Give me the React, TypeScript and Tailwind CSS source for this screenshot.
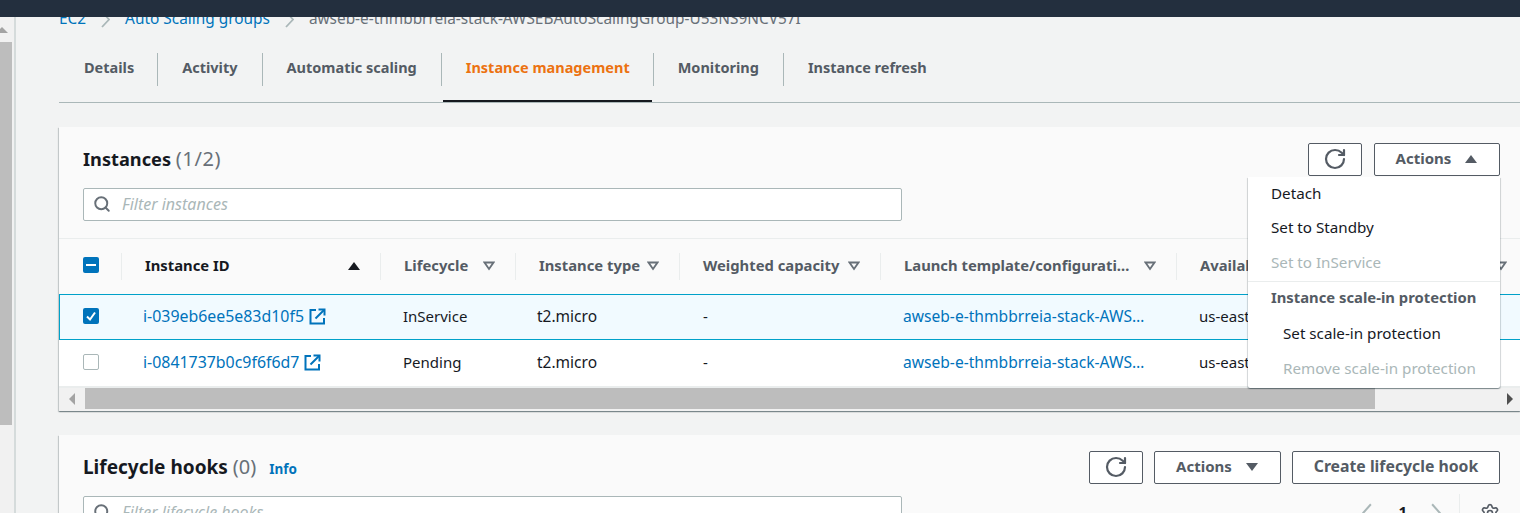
import React from 'react';
import { RotateCw, Search, Settings } from 'lucide-react';

const font = "font-['Noto_Sans',sans-serif]";
const panelShadow = 'shadow-[0_1px_1px_0_rgba(0,28,36,0.3),1px_1px_1px_0_rgba(0,28,36,0.15),-1px_1px_1px_0_rgba(0,28,36,0.15)]';

const tabs = ['Details', 'Activity', 'Automatic scaling', 'Instance management', 'Monitoring', 'Instance refresh'];

const Caret = ({ up, className }: { up?: boolean; className?: string }) => (
  <svg width="14" height="10" viewBox="0 0 14 10" className={className}>
    <path d={up ? 'M7 1 L13 9 H1 Z' : 'M7 9 L13 1 H1 Z'} fill="currentColor" />
  </svg>
);

const SortCaret = () => (
  <svg width="12" height="10" viewBox="0 0 12 10" className="shrink-0 text-[#687078]">
    <path d="M6 8 L10.5 1.5 H1.5 Z" fill="none" stroke="currentColor" strokeWidth="1.8" />
  </svg>
);

// open-in-new-tab icon, heavier than the lucide one
const External = () => (
  <svg width="17" height="17" viewBox="0 0 17 17" className="ml-[5px] shrink-0" fill="none" stroke="currentColor" strokeWidth="2">
    <path d="M7 2 H1.5 V15.5 H15 V10" />
    <path d="M6.5 10.5 L15 2" />
    <path d="M9.5 1.5 H15.5 V7.5" />
  </svg>
);

const Chevron = ({ left, className, w = 9, h = 17 }: { left?: boolean; className?: string; w?: number; h?: number }) => (
  <svg width={w} height={h} viewBox="0 0 9 17" preserveAspectRatio="none" className={`shrink-0 ${className ?? ''}`} fill="none" stroke="currentColor" strokeWidth="1.8">
    <path d={left ? 'M8 1 L1 8.5 L8 16' : 'M1 1 L8 8.5 L1 16'} />
  </svg>
);

const Button = ({ className, children }: { className: string; children: React.ReactNode }) => (
  <div className={`flex h-[33px] items-center justify-center rounded-[2px] border border-[#545b64] bg-white pb-[2px] font-bold text-[#545b64] ${className}`}>
    {children}
  </div>
);

const Refresh = () => (
  <Button className="w-[54px]">
    <RotateCw size={24} strokeWidth={2.2} />
  </Button>
);

const Filter = ({ placeholder }: { placeholder: string }) => (
  <div className="flex h-[33px] w-[819px] items-center rounded-[2px] border border-[#aab7b8] bg-white pb-[1px] pl-[9px] text-[16px] text-[#aab7b8] italic">
    <Search size={18} strokeWidth={2.6} className="mr-[11px] text-[#687078]" />
    {placeholder}
  </div>
);

const HeaderCell = ({ label, width, pr = 'pr-[21px]', divider = true, dark, sortUp }: {
  label: string; width: string; pr?: string; divider?: boolean; dark?: boolean; sortUp?: boolean;
}) => (
  <div className={`relative flex h-full shrink-0 items-center justify-between pb-[2px] pl-[23px] text-[14.8px] font-bold ${width} ${pr} ${dark ? 'text-[#16191f]' : 'text-[#545b64]'}`}>
    <span className="whitespace-nowrap">{label}</span>
    {sortUp ? <Caret up className="shrink-0 text-[#16191f]" /> : <SortCaret />}
    {divider && <div className="absolute top-[14px] right-0 h-[27px] w-px bg-[#eaeded]" />}
  </div>
);

const Row = ({ id, state, selected }: { id: string; state: string; selected?: boolean }) => (
  <div className={`flex h-[46px] w-[1600px] items-center pb-[2px] text-[15px] leading-[22px] text-[#16191f] ${selected ? 'border-y border-l border-[#00a1c9] bg-[#f1faff]' : 'bg-white'}`}>
    <div className={`flex shrink-0 justify-center ${selected ? 'w-[62px] pr-[1px]' : 'w-[63px]'}`}>
      {selected ? (
        <div className="flex h-[16px] w-[16px] items-center justify-center rounded-[2px] bg-[#0073bb]">
          <svg width="12" height="12" viewBox="0 0 12 12">
            <path d="M2 6.5 L5 9.5 L10 2.5" fill="none" stroke="white" strokeWidth="2" />
          </svg>
        </div>
      ) : (
        <div className="h-[16px] w-[16px] rounded-[2px] border border-[#aab7b8] bg-white" />
      )}
    </div>
    <div className="flex w-[259px] shrink-0 items-center pl-[21px] text-[15.9px] text-[#0073bb]">
      {id}
      <External />
    </div>
    <div className="w-[135px] shrink-0 pl-[22px]">{state}</div>
    <div className="w-[164px] shrink-0 pl-[21px] text-[15.5px]">t2.micro</div>
    <div className="w-[201px] shrink-0 pl-[23px]">-</div>
    <div className="w-[296px] shrink-0 pl-[22px] text-[15.6px] whitespace-nowrap text-[#0073bb]">awseb-e-thmbbrreia-stack-AWS…</div>
    <div className="pl-[22px]">us-east-1a</div>
  </div>
);

const App: React.FC = () => {
  return (
    <div className={`flex h-[513px] w-[1520px] flex-col overflow-hidden bg-[#f2f3f3] ${font}`}>
      <div className="relative z-10 h-[17px] shrink-0 bg-[#232f3e]" />
      <div className="flex min-h-0 flex-1">
        {/* page scrollbar */}
        <div className="flex w-[16px] shrink-0">
          <div className="flex w-[14px] flex-col bg-[#f1f1f1]">
            <div className="h-[25px] w-[12px] overflow-hidden pt-[10px]">
              <div className="-ml-[4px] h-0 w-0 border-x-[6px] border-b-[6px] border-x-transparent border-b-[#a3a3a3]" />
            </div>
            <div className="h-[383px] w-[12px] bg-[#bdbdbd]" />
          </div>
          <div className="w-[2px] bg-[#d5dbdb]" />
        </div>

        <div className="relative min-w-0 flex-1 pl-[43px]">
          <div className="-mt-[9px] flex h-[22px] items-center whitespace-nowrap text-[15.4px] text-[#687078]">
            <span className="text-[#0073bb]">EC2</span>
            <Chevron className="mx-[15px] text-[#aab7b8]" />
            <span className="text-[#0073bb]">Auto Scaling groups</span>
            <Chevron className="mx-[15px] text-[#aab7b8]" />
            <span>awseb-e-thmbbrreia-stack-AWSEBAutoScalingGroup-U53NS9NCV57I</span>
          </div>

          {/* tabs */}
          <div className="mt-[5px] flex h-[68px] border-b border-[#aab7b8]">
            {tabs.map((tab, i) => (
              <div key={tab} className="relative h-full pt-[18px]">
                <div className={`flex h-[33px] items-center pb-[3px] text-[14.5px] font-bold ${i === 0 ? 'pr-[23px] pl-[25px]' : i === 3 ? 'pr-[23px] pl-[24px]' : 'px-[24px]'} ${i === 3 ? 'text-[#ec7211]' : 'text-[#545b64]'} ${i < tabs.length - 1 ? 'border-r border-[#aab7b8]' : ''}`}>
                  {tab}
                </div>
                {i === 3 && <div className="absolute right-[2px] bottom-0 left-[1px] h-[2px] bg-[#16191f]" />}
              </div>
            ))}
          </div>

          {/* instances panel */}
          <div className={`mt-[24px] h-[284px] overflow-hidden bg-white ${panelShadow}`}>
            <div className="h-[112px] border-b border-[#eaeded] bg-[#fafafa] pt-[16px] pr-[20px] pl-[24px]">
              <div className="flex h-[33px] items-center justify-between">
                <div className="pb-[2px] text-[18.2px] font-bold text-[#16191f]">
                  Instances <span className="text-[20px] font-normal tracking-[0.6px] text-[#687078]">(1/2)</span>
                </div>
                <div className="flex gap-[12px]">
                  <Refresh />
                  <Button className="w-[126px] gap-[13px] text-[15px]">Actions <Caret up /></Button>
                </div>
              </div>
              <div className="mt-[12px]"><Filter placeholder="Filter instances" /></div>
            </div>
            <div className="flex h-[55px] w-[1600px] items-center bg-[#fafafa]">
              <div className="relative flex h-full w-[63px] shrink-0 items-center justify-center pb-[3px]">
                <div className="flex h-[16px] w-[16px] items-center justify-center rounded-[2px] bg-[#0073bb]">
                  <div className="h-[2px] w-[10px] bg-white" />
                </div>
                <div className="absolute top-[14px] right-0 h-[27px] w-px bg-[#eaeded]" />
              </div>
              <HeaderCell label="Instance ID" width="w-[259px]" pr="pr-[20px]" dark sortUp />
              <HeaderCell label="Lifecycle" width="w-[135px]" />
              <HeaderCell label="Instance type" width="w-[164px]" />
              <HeaderCell label="Weighted capacity" width="w-[201px]" />
              <HeaderCell label="Launch template/configurati…" width="w-[296px]" />
              <HeaderCell label="Availability Zone" width="w-[330px]" divider={false} pr="pr-[0px]" />
            </div>
            <Row id="i-039eb6ee5e83d10f5" state="InService" selected />
            <Row id="i-0841737b0c9f6f6d7" state="Pending" />
            <div className="flex h-[25px] items-start border-t-2 border-[#eaeded] bg-[#f1f1f1]">
              <div className="flex h-[21px] w-[26px] shrink-0 items-center justify-center">
                <div className="h-0 w-0 border-y-[6px] border-r-[6px] border-y-transparent border-r-[#a3a3a3]" />
              </div>
              <div className="h-[21px] w-[1290px] bg-[#bdbdbd]" />
              <div className="flex-1" />
              <div className="flex h-[21px] w-[20px] shrink-0 items-center justify-center">
                <div className="h-0 w-0 border-y-[6px] border-l-[6px] border-y-transparent border-l-[#505050]" />
              </div>
            </div>
          </div>

          {/* actions menu */}
          <div className={`absolute top-[160px] left-[1232px] z-20 h-[211px] w-[252px] rounded-b-[2px] bg-white text-[15.2px] text-[#16191f] ${panelShadow}`}>
            <div className="flex h-[34px] items-center pb-[2px] pl-[23px]">Detach</div>
            <div className="flex h-[35px] items-center pb-[2px] pl-[23px]">Set to Standby</div>
            <div className="flex h-[35px] items-center pb-[2px] pl-[23px] text-[#aab7b8]">Set to InService</div>
            <div className="flex h-[35px] items-center border-t border-[#eaeded] pb-[3px] pl-[23px] text-[14.8px] font-bold text-[#545b64]">Instance scale-in protection</div>
            <div className="flex h-[35px] items-center pl-[35px]">Set scale-in protection</div>
            <div className="flex h-[35px] items-center pl-[35px] text-[#aab7b8]">Remove scale-in protection</div>
          </div>

          {/* lifecycle hooks panel */}
          <div className={`mt-[24px] h-[120px] bg-[#fafafa] pt-[16px] pr-[20px] pl-[24px] ${panelShadow}`}>
            <div className="flex h-[33px] items-center justify-between">
              <div className="flex items-baseline pb-[2px] text-[19px] font-bold text-[#16191f]">
                Lifecycle hooks&nbsp;<span className="text-[20px] font-normal text-[#687078]">(0)</span>
                <span className="ml-[13px] text-[13.5px] text-[#0073bb]">Info</span>
              </div>
              <div className="flex gap-[11px]">
                <Refresh />
                <Button className="w-[127px] gap-[13px] text-[15px]">Actions <Caret /></Button>
                <Button className="w-[208px] text-[15.8px]">Create lifecycle hook</Button>
              </div>
            </div>
            <div className="mt-[12px] flex items-start justify-between">
              <Filter placeholder="Filter lifecycle hooks" />
              <div className="flex items-center pt-[4px] text-[#aab7b8]">
                <Chevron left w={10} h={20} />
                <span className="mr-[24px] ml-[26px] pb-[4px] text-[15px] font-bold text-[#16191f]">1</span>
                <Chevron w={10} h={20} />
                <div className="mr-[20px] ml-[18px] -mt-[8px] h-[30px] w-px bg-[#eaeded]" />
                <Settings size={20} className="text-[#545b64]" />
              </div>
            </div>
          </div>
        </div>
      </div>
    </div>
  );
};

export default App;
